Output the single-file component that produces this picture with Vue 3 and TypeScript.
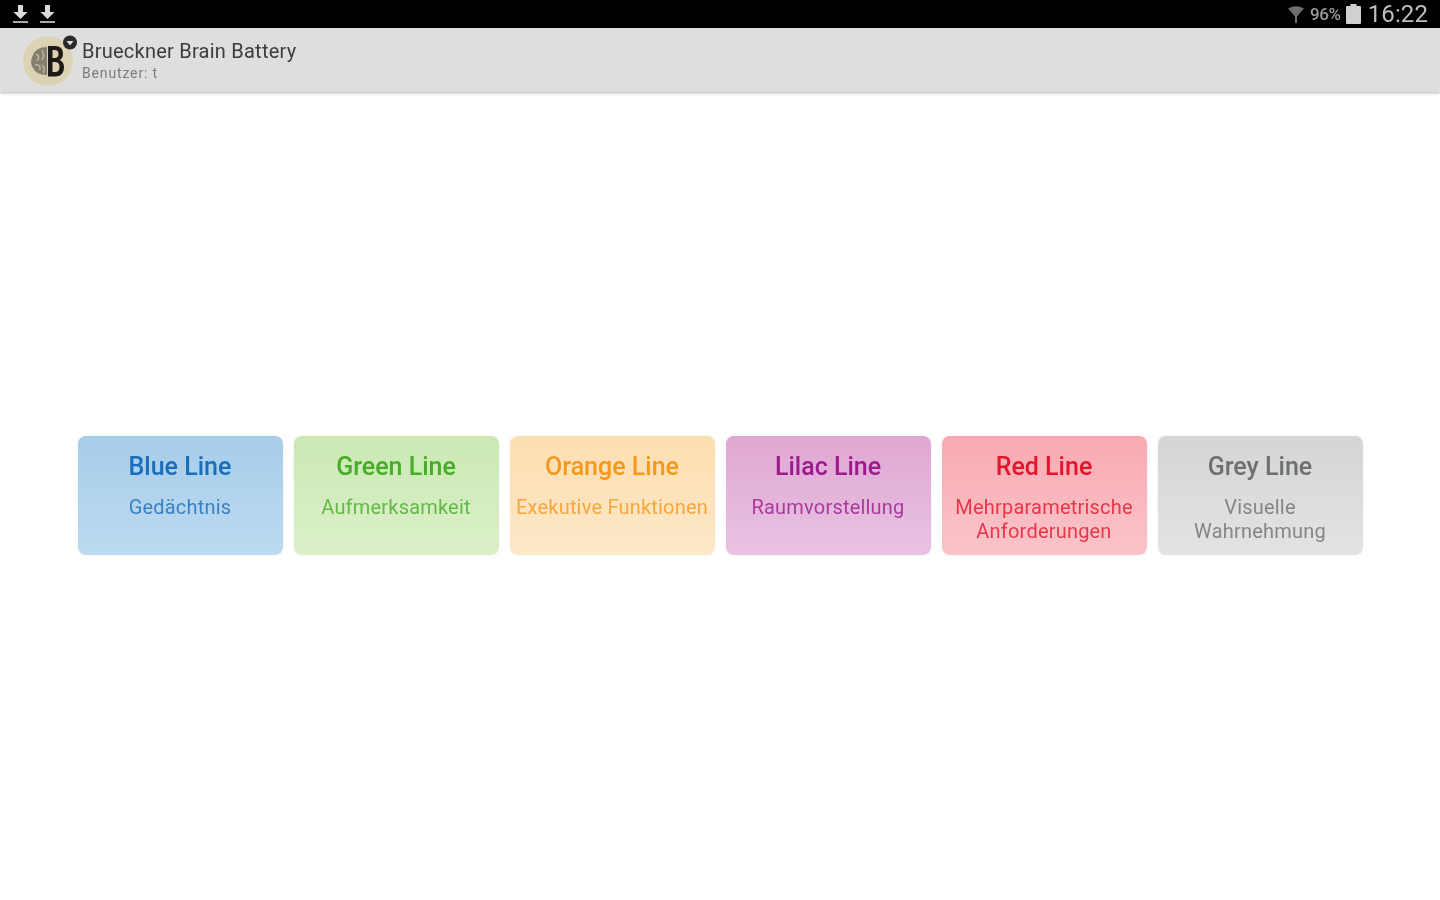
<script setup lang="ts">
interface Line { title: string; sub: string[]; kind: string }
const lines: Line[] = [
  { title: 'Blue Line', sub: ['Gedächtnis'], kind: 'blue' },
  { title: 'Green Line', sub: ['Aufmerksamkeit'], kind: 'green' },
  { title: 'Orange Line', sub: ['Exekutive Funktionen'], kind: 'orange' },
  { title: 'Lilac Line', sub: ['Raumvorstellung'], kind: 'lilac' },
  { title: 'Red Line', sub: ['Mehrparametrische', 'Anforderungen'], kind: 'red' },
  { title: 'Grey Line', sub: ['Visuelle', 'Wahrnehmung'], kind: 'grey' },
]
</script>

<template>
  <div class="screen">
    <div class="status">
      <div class="status-left">
        <svg v-for="n in 2" :key="n" class="dl" width="17" height="20" viewBox="0 0 17 20">
          <path d="M6 1h5v7h4.500L8.500 15 1.500 8H6z" fill="#dcdcdc" />
          <rect x="1" y="17" width="15" height="2" fill="#a8a8a8" />
        </svg>
      </div>
      <div class="status-right">
        <svg class="wifi" width="16" height="20" viewBox="0 0 16 20">
          <path d="M0 4.500Q8 0 16 4.500L9 12.500V19H7V12.500z" fill="#6e6e6e" />
        </svg>
        <span class="pct">96%</span>
        <svg class="batt" width="15" height="20" viewBox="0 0 15 20">
          <path d="M4.500 0h6v2H14a1 1 0 0 1 1 1v16a1 1 0 0 1-1 1H1a1 1 0 0 1-1-1V3a1 1 0 0 1 1-1h3.500z" fill="#d0d0d0" />
        </svg>
        <span class="time">16:22</span>
      </div>
    </div>

    <header class="bar">
      <div class="logo">
        <svg width="56" height="54" viewBox="0 0 56 54">
          <circle cx="26" cy="29" r="25" fill="#dcd3b4" />
          <path d="M25 15Q14 15 11 23Q7 30 11 36Q14 43 25 43z" fill="#857f70" />
          <path d="M14 22Q19 25 15 29M13 33Q19 32 18 38M20 18Q23 24 20 28M20 33Q24 36 21 41" fill="none" stroke="#bdb69e" stroke-width="1.500" />
          <path fill-rule="evenodd" d="M26 14h7q8 0 8 7.500 0 5-3.500 6.500 4.500 1.500 4.500 7.500 0 9-9 9h-7zM30.500 18v8h2q4 0 4-4t-4-4zM30.500 30v10h2.500q4.500 0 4.500-5t-4.500-5z" fill="#1e1a16" />
          <circle cx="48" cy="10.500" r="7" fill="#2a2a2a" />
          <path d="M44.500 9h7L48 13.500z" fill="#dedede" />
        </svg>
      </div>
      <div class="titles">
        <div class="app-name">Brueckner Brain Battery</div>
        <div class="user">Benutzer: t</div>
      </div>
    </header>

    <main class="content">
      <div class="cards">
        <div v-for="l in lines" :key="l.kind" class="card" :class="l.kind">
          <div class="card-title">{{ l.title }}</div>
          <div class="card-sub">
            <div v-for="s in l.sub" :key="s">{{ s }}</div>
          </div>
        </div>
      </div>
    </main>
  </div>
</template>

<style>
html, body { margin: 0; background: #fff; }
</style>

<style scoped>
.screen {
  width: 1440px;
  height: 900px;
  display: flex;
  flex-direction: column;
  font-family: Roboto, "Liberation Sans", sans-serif;
  overflow: hidden;
  background: #fff;
}
.status {
  height: 28px;
  background: #000;
  display: flex;
  justify-content: space-between;
  align-items: center;
  padding: 0 12px;
  flex: none;
}
.status-left { display: flex; gap: 10px; filter: blur(0.7px); }
.dl { display: block; }
.status-right {
  display: flex;
  align-items: center;
  color: #c4c4c4;
  filter: blur(0.7px);
}
.wifi { margin-right: 6px; }
.pct { font-size: 17px; font-weight: 500; color: #9a9a9a; margin-right: 5px; letter-spacing: -0.4px; }
.batt { margin-right: 7px; }
.time { font-size: 24px; color: #bebebe; line-height: 28px; letter-spacing: 0.1px; }
.bar {
  height: 64px;
  flex: none;
  background: #dedede;
  box-shadow: 0 1px 3px rgba(0, 0, 0, 0.3);
  display: flex;
  align-items: center;
  padding-left: 22px;
  position: relative;
}
.logo { width: 56px; height: 54px; margin-top: -3px; margin-right: 4px; filter: blur(0.7px); }
.logo svg { display: block; }
.titles { filter: blur(0.6px); }
.app-name { font-size: 20px; line-height: 24px; color: #3c3c3c; letter-spacing: 0.24px; }
.user { font-size: 14px; line-height: 18px; color: #7c7c7c; margin-top: 1px; letter-spacing: 0.85px; }
.content {
  flex: 1;
  display: flex;
  align-items: center;
  justify-content: center;
}
.cards { display: flex; gap: 11px; margin-top: -1px; }
.card {
  width: 205px;
  height: 119px;
  box-sizing: border-box;
  border-radius: 8px;
  padding-top: 16px;
  text-align: center;
  box-shadow: 0 0 2px rgba(0, 0, 0, 0.1);
}
.card-title {
  font-size: 25px;
  line-height: 30px;
  font-weight: 500;
  filter: blur(0.6px);
}
.card-sub {
  font-size: 20px;
  line-height: 24px;
  margin-top: 13px;
  letter-spacing: 0.2px;
  filter: blur(0.6px);
  opacity: 0.8;
  white-space: nowrap;
}
.blue { background: linear-gradient(#a7cde9, #bcdaf0); color: #1a6dba; }
.green { background: linear-gradient(#cae9b4, #dcf0c9); color: #47ad27; }
.orange { background: linear-gradient(#fddeb0, #fde8c8); color: #f7981d; }
.lilac { background: linear-gradient(#dfa7d3, #e9c2e3); color: #9c1a8c; }
.red { background: linear-gradient(#f9a9b2, #fbc4ca); color: #e4162c; }
.grey { background: linear-gradient(#d4d6d6, #e2e3e3); color: #6e7070; }
</style>
